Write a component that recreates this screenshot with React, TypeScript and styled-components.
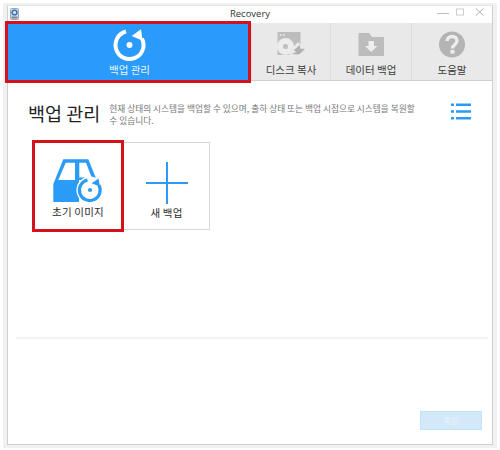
import React from "react";
import styled, { createGlobalStyle } from "styled-components";

const Global = createGlobalStyle`
  html, body { margin: 0; padding: 0; background: #fff; }
  #root { width: 500px; height: 450px; overflow: hidden; }
`;

const Stage = styled.div`
  width: 500px;
  height: 450px;
  box-sizing: border-box;
  padding: 3px 3px 2px 3px;
  font-family: "Noto Sans CJK KR", "Noto Sans", sans-serif;
`;

const Shadow = styled.div`
  height: 100%;
  box-sizing: border-box;
  background: #f1f1f1;
  padding: 2px 4px 3px 4px;
`;

const Window = styled.div`
  height: 100%;
  box-sizing: border-box;
  background: #fff;
  border: 1px solid #cfcfcf;
  border-top-color: #e4e4e4;
  display: flex;
  flex-direction: column;
`;

const TitleBar = styled.div`
  height: 17px;
  box-sizing: border-box;
  padding-bottom: 3px;
  flex: none;
  position: relative;
  display: flex;
  align-items: center;
  justify-content: center;
  font: 9.5px "Open Sans", "Liberation Sans", sans-serif;
  color: #333;
`;

const AppIcon = styled.svg`
  position: absolute;
  left: 2px;
  top: 2px;
`;

const WinButtons = styled.div`
  position: absolute;
  right: 8px;
  top: 2px;
  display: flex;
  gap: 7px;
  align-items: flex-start;
`;

const Tabs = styled.div`
  display: grid;
  grid-template-columns: 243px 79px 81px 1fr;
  height: 57px;
  flex: none;
  background: #e9e9e9;
  border-bottom: 1px solid #cfcfcf;
`;

const Tab = styled.div<{ $active?: boolean }>`
  display: flex;
  flex-direction: column;
  align-items: center;
  padding-top: 5px;
  box-sizing: border-box;
  position: relative;
  background: ${(p) => (p.$active ? "#2b9bfb" : "#e9e9e9")};
  color: ${(p) => (p.$active ? "#e6f3ff" : "#3c3c3c")};
  border-left: ${(p) => (p.$active ? "none" : "1px solid #dcdcdc")};
  font-size: 10.5px;
  line-height: 14px;
  svg { height: 34px; flex: none; margin-bottom: 1px; }
  ${(p) =>
    p.$active
      ? `&::after {
          content: "";
          position: absolute;
          left: -3px;
          top: -2px;
          right: 0;
          bottom: -3px;
          border: 3px solid #d5121c;
          z-index: 1;
        }`
      : ""}
`;

const Content = styled.div`
  flex: 1;
  display: flex;
  flex-direction: column;
  min-height: 0;
`;

const Header = styled.div`
  display: flex;
  padding: 20px 21px 0 20px;
  height: 60px;
  box-sizing: border-box;
  flex: none;
`;

const Heading = styled.h1`
  margin: 0;
  font-size: 18.5px;
  font-weight: 400;
  line-height: 24px;
  color: #222;
  white-space: nowrap;
  flex: none;
`;

const Description = styled.p`
  margin: 0 0 0 9px;
  width: 322px;
  flex: none;
  font-size: 8.7px;
  line-height: 11.5px;
  color: #777;
  padding-top: 2px;
  word-break: keep-all;
`;

const ListButton = styled.svg`
  margin-left: auto;
  margin-top: 2px;
  flex: none;
`;

const Cards = styled.div`
  display: flex;
  padding: 1px 0 0 27px;
  height: 90px;
  flex: none;
  align-items: flex-start;
`;

const Card = styled.div<{ $marked?: boolean }>`
  width: 86px;
  height: ${(p) => (p.$marked ? "86px" : "88px")};
  box-sizing: border-box;
  display: flex;
  flex-direction: column;
  align-items: center;
  font-size: 10.5px;
  line-height: 14px;
  letter-spacing: 0.2px;
  color: #2c2c2c;
  background: #fff;
  ${(p) =>
    p.$marked
      ? "outline: 3px solid #d5121c; margin: 1px 3px 0 0; padding-top: 16px;"
      : "border: 1px solid #d8d8d8; border-left: none; padding-top: 18px;"}
`;

const CardLabel = styled.span`
  margin-top: 1px;
`;

const Divider = styled.div`
  height: 2px;
  background: #f4f4f4;
  margin: 105px 4px 0 8px;
  flex: none;
`;

const Footer = styled.div`
  display: flex;
  justify-content: flex-end;
  padding: 72px 10px 0 0;
`;

const RestoreButton = styled.div`
  width: 62px;
  height: 19px;
  box-sizing: border-box;
  background: #d3e8f8;
  border: 1px solid #c3e2f7;
  color: #eaf4fc;
  font-size: 8px;
  line-height: 17px;
  text-align: center;
`;

const RefreshIcon = ({ color }: { color: string }) => (
  <svg viewBox="0 0 34 34" width="34" height="34">
    <path d="M13 3.5 A14 14 0 1 0 29 10.7" fill="none" stroke={color} strokeWidth="4" />
    <path d="M18.7 8 L28 1.3 L29.7 12.7 Z" fill={color} />
    <circle cx="16.5" cy="17" r="3" fill={color} />
  </svg>
);

export default function App() {
  return (
    <Stage>
      <Global />
      <Shadow>
        <Window>
          <TitleBar>
            Recovery
            <AppIcon width="9" height="12" viewBox="0 0 9 12">
              <rect x="0.5" y="0.5" width="8" height="11" rx="1" fill="#d5dbe4" stroke="#9aa6b5" />
              <circle cx="4.5" cy="4.5" r="2.4" fill="none" stroke="#2d6fb5" strokeWidth="1.4" />
              <rect x="1.5" y="8.5" width="6" height="2" fill="#7a8796" />
            </AppIcon>
            <WinButtons>
              <svg width="12" height="8" viewBox="0 0 12 8">
                <path d="M0 5.5 H12" stroke="#bdbdbd" strokeWidth="1" />
              </svg>
              <svg width="8" height="8" viewBox="0 0 8 8">
                <rect x="0.5" y="1" width="7" height="6" fill="none" stroke="#cdcdcd" />
              </svg>
              <svg width="13" height="8" viewBox="0 0 13 8">
                <path d="M5 0.5 L12.5 7.5 M12.5 0.5 L5 7.5" stroke="#b0b0b0" strokeWidth="1" fill="none" />
              </svg>
            </WinButtons>
          </TitleBar>
          <Tabs>
            <Tab $active>
              <RefreshIcon color="#fff" />
              백업 관리
            </Tab>
            <Tab>
              <svg viewBox="0 0 34 34" width="34" height="34">
                <path d="M3.5 4 H26.5 V27 H3.5 Z" fill="#bdbdbd" />
                <circle cx="6.5" cy="7" r="0.9" fill="#eee" />
                <circle cx="10" cy="7" r="0.9" fill="#eee" />
                <circle cx="11.5" cy="18.5" r="8.5" fill="#ececec" />
                <circle cx="11.5" cy="18.5" r="2.5" fill="#bdbdbd" />
                <path d="M15 28 L17 21.5 L24 14 L34 24 L26 31 H18 Z" fill="#e9e9e9" />
                <path d="M18 26 L25 26.5 L31 21 L26 20.5 L26 17 L20 22 L22 24 Z" fill="#b0b0b0" />
              </svg>
              디스크 복사
            </Tab>
            <Tab>
              <svg viewBox="0 0 34 34" width="34" height="34">
                <path d="M4.5 5 H15 L18 9 H30 V28 H4.5 Z" fill="#bcbcbc" />
                <path d="M14.5 13 H20 V18 H23.5 L17.2 24 L11 18 H14.5 Z" fill="#eeeeee" />
              </svg>
              데이터 백업
            </Tab>
            <Tab>
              <svg viewBox="0 0 34 34" width="34" height="34">
                <circle cx="17" cy="16.5" r="13" fill="#b4b4b4" />
                <path
                  d="M12.2 13 C12.2 7 22 7 22 13 C22 16.5 17.4 16.5 17.4 20.5"
                  fill="none"
                  stroke="#eee"
                  strokeWidth="3.4"
                />
                <rect x="15.5" y="22" width="4" height="3.6" fill="#eee" />
              </svg>
              도움말
            </Tab>
          </Tabs>
          <Content>
            <Header>
              <Heading>백업 관리</Heading>
              <Description>
                현재 상태의 시스템을 백업할 수 있으며, 출하 상태 또는 백업 시점으로 시스템을 복원할
                <br />수 있습니다.
              </Description>
              <ListButton width="20" height="17" viewBox="0 0 20 17">
                <path d="M0 0.5 H3 V3 H0 Z M5 0.5 H20 V3 H5 Z M0 7.2 H3 V9.7 H0 Z M5 7.2 H20 V9.7 H5 Z M0 14 H3 V16.5 H0 Z M5 14 H20 V16.5 H5 Z" fill="#2a9bf6" />
              </ListButton>
            </Header>
            <Cards>
              <Card $marked>
                <svg width="50" height="46" viewBox="0 0 50 46">
                  <path
                    fillRule="evenodd"
                    d="M10.3 0.3 H35.3 L43.7 21 H26 V43 H0.3 V25 Z M12.7 3.7 L5.3 21 H22 V3.7 Z M26.3 3.7 V18.5 H38.7 L33 3.7 Z"
                    fill="#2a9bf6"
                  />
                  <circle cx="37" cy="31" r="13.6" fill="#fff" />
                  <path d="M34.5 21 A10.4 10.4 0 1 0 45.8 26" fill="none" stroke="#2a9bf6" strokeWidth="3.2" />
                  <path d="M38.6 24.2 L45.6 19.4 L46.8 27.6 Z" fill="#2a9bf6" />
                  <circle cx="37" cy="31" r="2.1" fill="#2a9bf6" />
                </svg>
                <span>초기 이미지</span>
              </Card>
              <Card>
                <svg width="44" height="44" viewBox="0 0 44 44">
                  <path d="M22 1 V43 M1 22 H43" stroke="#2a9bf6" strokeWidth="2" fill="none" />
                </svg>
                <CardLabel>새 백업</CardLabel>
              </Card>
            </Cards>
            <Divider />
            <Footer>
              <RestoreButton>복원</RestoreButton>
            </Footer>
          </Content>
        </Window>
      </Shadow>
    </Stage>
  );
}
